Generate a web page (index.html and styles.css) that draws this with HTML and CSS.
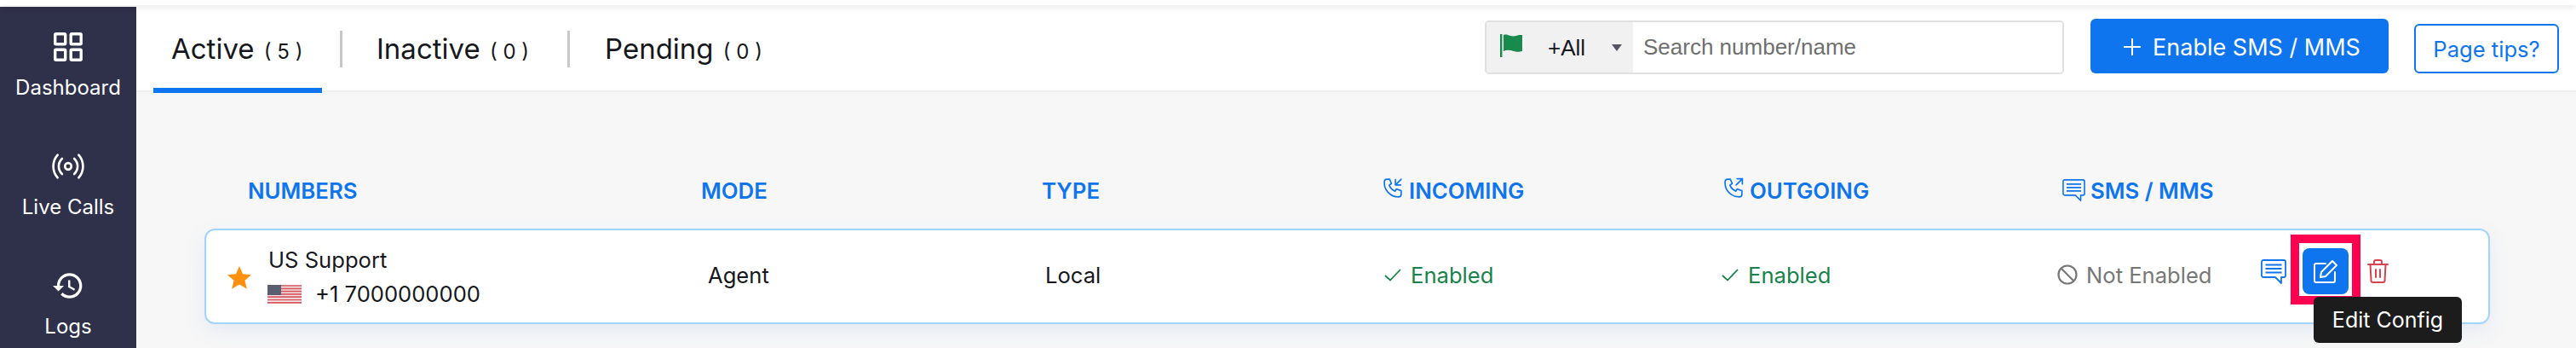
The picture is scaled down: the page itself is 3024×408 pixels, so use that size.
FILE: index.html
```html
<!DOCTYPE html>
<html lang="en">
<head>
    <meta charset="UTF-8">
    <title>Numbers</title>
    <link rel="stylesheet" href="styles.css">
</head>
<body>
    <div class="top-strip"></div>
    <div class="layout">
        <aside class="sidebar">
            <a class="nav-item">
                <svg class="nav-icon" viewBox="0 0 36 36" fill="none" stroke="#fff" stroke-width="3.4" stroke-linejoin="round">
                    <rect x="2.7" y="2.7" width="12" height="12" rx="1"/>
                    <rect x="21.2" y="2.7" width="12" height="12" rx="1"/>
                    <rect x="2.7" y="21.2" width="12" height="12" rx="1"/>
                    <rect x="21.2" y="21.2" width="12" height="12" rx="1"/>
                </svg>
                <span>Dashboard</span>
            </a>
            <a class="nav-item">
                <svg class="nav-icon" viewBox="0 0 40 36" fill="none" stroke="#fff" stroke-width="2.8" stroke-linecap="round">
                    <circle cx="20" cy="18" r="4"/>
                    <path d="M12.5 8.5a13 13 0 0 0 0 19"/>
                    <path d="M27.5 8.5a13 13 0 0 1 0 19"/>
                    <path d="M7 4a21 21 0 0 0 0 28"/>
                    <path d="M33 4a21 21 0 0 1 0 28"/>
                </svg>
                <span>Live Calls</span>
            </a>
            <a class="nav-item">
                <svg class="nav-icon" viewBox="1 1 22 22" fill="#fff">
                    <path d="M13 3a9 9 0 0 0-9 9H1l3.89 3.89.07.14L9 12H6c0-3.87 3.13-7 7-7s7 3.13 7 7-3.13 7-7 7c-1.93 0-3.68-.79-4.94-2.06l-1.42 1.42A8.954 8.954 0 0 0 13 21a9 9 0 0 0 0-18zm-1 5v5l4.28 2.54.72-1.21-3.5-2.08V8H12z"/>
                </svg>
                <span>Logs</span>
            </a>
        </aside>

        <main class="content">
            <header class="topbar">
                <div class="tabs">
                    <div class="tab tab-active">Active <small>( 5 )</small></div>
                    <div class="tab">Inactive <small>( 0 )</small></div>
                    <div class="tab">Pending <small>( 0 )</small></div>
                </div>
                <div class="search">
                    <div class="search-prefix">
                        <svg class="flag-icon" viewBox="0 0 26 27">
                            <rect x="0" y="0" width="2.4" height="27" fill="#178a4c"/>
                            <path d="M4 1c3-1 5 0 8 1 4 1 7 0 10-1h4v19c-4 1-6 1-10 0-4-1-8-2-12 0z" fill="#178a4c"/>
                        </svg>
                        <span class="prefix-text">+All</span>
                        <span class="caret"></span>
                    </div>
                    <input class="search-input" type="text" placeholder="Search number/name">
                </div>
                <button class="btn-primary"><span class="plus"></span>Enable SMS / MMS</button>
                <button class="btn-tips">Page tips?</button>
            </header>

            <section class="list">
                <div class="list-head">
                    <div>NUMBERS</div>
                    <div>MODE</div>
                    <div>TYPE</div>
                    <div class="head-cell">
                        <svg class="head-icon" viewBox="0 0 24 24" fill="none" stroke="#0f75ef" stroke-width="1.6" stroke-linecap="round" stroke-linejoin="round">
                            <path d="M4.5 2h3.5l2 5-2.5 1.8a12 12 0 0 0 6.7 6.7L15.5 13l5.5 2v4a3 3 0 0 1-3 3A16 16 0 0 1 2 5a3 3 0 0 1 2.500-3"/>
                            <path d="M15 8l6-6"/><path d="M14.500 2.500V8.500h6"/>
                        </svg>
                        INCOMING
                    </div>
                    <div class="head-cell">
                        <svg class="head-icon" viewBox="0 0 24 24" fill="none" stroke="#0f75ef" stroke-width="1.6" stroke-linecap="round" stroke-linejoin="round">
                            <path d="M4.500 2h3.500l2 5-2.500 1.800a12 12 0 0 0 6.700 6.700L15.500 13l5.500 2v4a3 3 0 0 1-3 3A16 16 0 0 1 2 5a3 3 0 0 1 2.500-3"/>
                            <path d="M14.500 8.500l7-7"/><path d="M15.500 1.500h6v6"/>
                        </svg>
                        OUTGOING
                    </div>
                    <div class="head-cell">
                        <svg class="head-icon sms-icon" viewBox="0 0 30 29" fill="none" stroke="#0f75ef" stroke-width="1.800" stroke-linejoin="round">
                            <path d="M3 1h24a2 2 0 0 1 2 2v16a2 2 0 0 1-2 2h-3v7l-7-7H3a2 2 0 0 1-2-2V3a2 2 0 0 1 2-2z"/>
                            <path d="M5.500 6.500h19M5.500 11h19M5.500 15.500h19"/>
                        </svg>
                        SMS / MMS
                    </div>
                </div>

                <div class="row-card">
                    <div class="number-cell">
                        <svg class="star" viewBox="0 0 28 27"><path d="M14 0l4.100 9.300 9.900.9-7.500 6.600 2.300 10L14 21.500 5.200 26.800l2.300-10L0 10.200l9.900-.9z" fill="#ff9010"/></svg>
                        <div class="number-info">
                            <div class="number-name">US Support</div>
                            <div class="number-line">
                                <svg class="us-flag" viewBox="0 0 40 22">
                                    <rect width="40" height="22" fill="#f1e6e6"/>
                                    <path d="M0 1h40M0 4.300h40M0 7.600h40M0 10.900h40M0 14.200h40M0 17.500h40M0 20.800h40" stroke="#d9555f" stroke-width="1.700"/>
                                    <rect width="16" height="12" fill="#5b5d70"/>
                                </svg>
                                <span>+1 7000000000</span>
                            </div>
                        </div>
                    </div>
                    <div>Agent</div>
                    <div>Local</div>
                    <div class="status status-on">
                        <svg class="check" viewBox="0 0 20 15" fill="none" stroke="#17834a" stroke-width="1.800"><path d="M1 8l6 5.500L19 1"/></svg>
                        <span>Enabled</span>
                    </div>
                    <div class="status status-on">
                        <svg class="check" viewBox="0 0 20 15" fill="none" stroke="#17834a" stroke-width="1.800"><path d="M1 8l6 5.500L19 1"/></svg>
                        <span>Enabled</span>
                    </div>
                    <div class="status status-off">
                        <svg class="ban" viewBox="0 0 24 24" fill="none" stroke="#777" stroke-width="2.200"><circle cx="12" cy="12" r="10.500"/><path d="M4.500 4.500l15 15"/></svg>
                        <span>Not Enabled</span>
                    </div>
                    <div class="actions">
                        <svg class="act-sms" viewBox="0 0 30 29" fill="none" stroke="#0f75ef" stroke-width="1.800" stroke-linejoin="round">
                            <path d="M3 1h24a2 2 0 0 1 2 2v16a2 2 0 0 1-2 2h-3v7l-7-7H3a2 2 0 0 1-2-2V3a2 2 0 0 1 2-2z"/>
                            <path d="M5.500 6.500h19M5.500 11h19M5.500 15.500h19"/>
                        </svg>
                        <div class="act-edit">
                            <svg viewBox="0 0 28 27" fill="none" stroke="#fff" stroke-width="2" stroke-linejoin="round" stroke-linecap="round">
                                <path d="M14 4H3a2 2 0 0 0-2 2v18a2 2 0 0 0 2 2h20a2 2 0 0 0 2-2V14"/>
                                <path d="M22 1l5 5-13 13-6 1 1-6z"/>
                            </svg>
                            <span class="highlight"></span>
                            <span class="tooltip">Edit Config</span>
                        </div>
                        <svg class="act-trash" viewBox="0 0 25 28" fill="none" stroke="#d9434e" stroke-width="2" stroke-linecap="round" stroke-linejoin="round">
                            <path d="M1 6h23"/>
                            <path d="M8 6V3a2 2 0 0 1 2-2h5a2 2 0 0 1 2 2v3"/>
                            <path d="M3.500 6l1 19a2 2 0 0 0 2 2h12a2 2 0 0 0 2-2l1-19"/>
                            <path d="M10 12v9M15 12v9"/>
                        </svg>
                    </div>
                </div>
            </section>
        </main>
    </div>
</body>
</html>
```

FILE: styles.css
```css
* {
    box-sizing: border-box;
}
html, body {
    margin: 0;
    height: 408px;
    overflow: hidden;
    background: #fff;
    font-family: Inter, "Liberation Sans", sans-serif;
    color: #16181d;
}
.top-strip {
    position: relative;
    z-index: 2;
    height: 6px;
    background: #fff;
    box-shadow: 0 2px 8px rgba(0,0,0,0.12);
}
.layout {
    display: flex;
    height: 402px;
}

/* sidebar */
.sidebar {
    width: 160px;
    flex: none;
    margin-top: 2px;
    background: #2f3049;
    color: #fff;
    overflow: hidden;
}
.nav-item {
    display: flex;
    flex-direction: column;
    align-items: center;
    height: 140px;
    padding-top: 29px;
    font-size: 24px;
}
.nav-icon {
    width: 38px;
    height: 36px;
    margin-bottom: 15px;
}
.nav-item span {
    line-height: 30px;
}

/* top bar */
.content {
    flex: 1;
    min-width: 0;
    background: #f7f7f7;
}
.topbar {
    display: flex;
    align-items: flex-start;
    height: 102px;
    padding: 16px 20px 0 20px;
    background: #fff;
    border-bottom: 2px solid #eee;
}
.tabs {
    display: flex;
    margin-right: auto;
}
.tab {
    position: relative;
    width: 267px;
    height: 87px;
    padding: 14px 0 0 43px;
    font-size: 33px;
    line-height: 42px;
    white-space: nowrap;
}
.tab small {
    font-size: 24px;
    margin-left: 2px;
}
.tab + .tab::before {
    content: "";
    position: absolute;
    left: -1px;
    top: 14px;
    width: 3px;
    height: 43px;
    background: #c8c8c8;
}
.tab-active {
    width: 198px;
    padding-left: 21px;
    margin-right: 22px;
    border-bottom: 6px solid #0f75ef;
}
.tab-active + .tab {
    padding-left: 42px;
}
.search {
    display: flex;
    width: 680px;
    height: 63px;
    margin-top: 2px;
    border: 2px solid #e0e0e0;
    border-radius: 5px;
    overflow: hidden;
    font-family: "Liberation Sans", Arial, sans-serif;
    font-size: 26px;
}
.search-prefix {
    display: flex;
    align-items: center;
    width: 172px;
    flex: none;
    padding-left: 16px;
    padding-top: 2px;
    background: #f1f1f1;
    color: #16181d;
}
.flag-icon {
    width: 26px;
    height: 27px;
    margin-top: -6px;
}
.prefix-text {
    margin-left: 30px;
}
.caret {
    margin-left: 31px;
    margin-top: -2px;
    border-left: 6px solid transparent;
    border-right: 6px solid transparent;
    border-top: 8px solid #555566;
}
.search-input {
    flex: 1;
    min-width: 0;
    padding: 0 0 0 12px;
    border: none;
    outline: none;
    font: inherit;
    color: #16181d;
}
.search-input::placeholder {
    color: #6f6f6f;
}
.btn-primary {
    display: flex;
    align-items: center;
    justify-content: center;
    width: 350px;
    height: 64px;
    margin-left: 31px;
    padding: 2px 0 0 6px;
    border: none;
    border-radius: 6px;
    background: #0f75ef;
    color: #fff;
    font: inherit;
    font-size: 27px;
}
.plus {
    width: 20px;
    height: 20px;
    margin-right: 14px;
    background: linear-gradient(#fff, #fff) center / 100% 2px no-repeat,
                linear-gradient(#fff, #fff) center / 2px 100% no-repeat;
}
.btn-tips {
    width: 170px;
    height: 58px;
    margin-top: 6px;
    margin-left: 30px;
    border: 2px solid #0f75ef;
    border-radius: 6px;
    background: #fff;
    color: #0f75ef;
    font: inherit;
    font-size: 25.6px;
}

/* numbers list */
.list {
    padding: 99px 0 0 80px;
}
.list-head {
    display: grid;
    grid-template-columns: 532px 400px 400px 400px 398px auto;
    align-items: center;
    height: 32px;
    padding-left: 51px;
    color: #0f75ef;
    font-size: 25.8px;
    font-weight: 600;
    white-space: nowrap;
}
.head-cell {
    display: flex;
    align-items: center;
}
.head-icon {
    width: 25px;
    height: 25px;
    margin-right: 6px;
    margin-top: -5px;
}
.sms-icon {
    width: 27px;
    height: 26px;
    margin-top: 0;
}
.row-card {
    display: grid;
    grid-template-columns: 564px 396px 398px 396px 394px 239px auto;
    align-items: center;
    width: 2683px;
    height: 112px;
    margin-top: 29px;
    padding: 0 0 4px 25px;
    background: #fff;
    border: 2px solid #a3d4fd;
    border-radius: 12px;
    box-shadow: 0 8px 24px rgba(60,120,200,0.1);
    font-size: 25.6px;
}
.number-cell {
    display: flex;
    align-items: center;
    margin-top: 6px;
}
.star {
    width: 28px;
    height: 27px;
    margin-right: 19px;
}
.number-name {
    line-height: 36px;
    margin-left: 1px;
}
.number-line {
    display: flex;
    align-items: center;
    gap: 16px;
    margin-top: 4px;
    line-height: 36px;
    white-space: nowrap;
}
.us-flag {
    width: 40px;
    height: 22px;
}
.status {
    display: flex;
    align-items: center;
    white-space: nowrap;
}
.status-on {
    color: #17834a;
}
.status-off {
    color: #777;
}
.check {
    width: 20px;
    height: 15px;
    margin-right: 11px;
}
.ban {
    width: 24px;
    height: 24px;
    margin-right: 10px;
}
.actions {
    display: flex;
    align-items: center;
    margin-top: -8px;
}
.act-sms {
    width: 30px;
    height: 29px;
    margin-right: 19px;
}
.act-edit {
    position: relative;
    display: flex;
    align-items: center;
    justify-content: center;
    width: 54px;
    height: 54px;
    margin-right: 22px;
    background: #0f75ef;
    border-radius: 8px;
}
.act-edit svg {
    width: 28px;
    height: 27px;
}
.highlight {
    position: absolute;
    left: -14px;
    top: -16px;
    width: 82px;
    height: 82px;
    border: 10px solid #ff0050;
}
.tooltip {
    position: absolute;
    left: 13px;
    top: 57px;
    width: 174px;
    height: 54px;
    background: #1c1c1c;
    border-radius: 6px;
    color: #fff;
    font-size: 25px;
    line-height: 54px;
    text-align: center;
    white-space: nowrap;
    z-index: 3;
}
.act-trash {
    width: 25px;
    height: 28px;
}
```
